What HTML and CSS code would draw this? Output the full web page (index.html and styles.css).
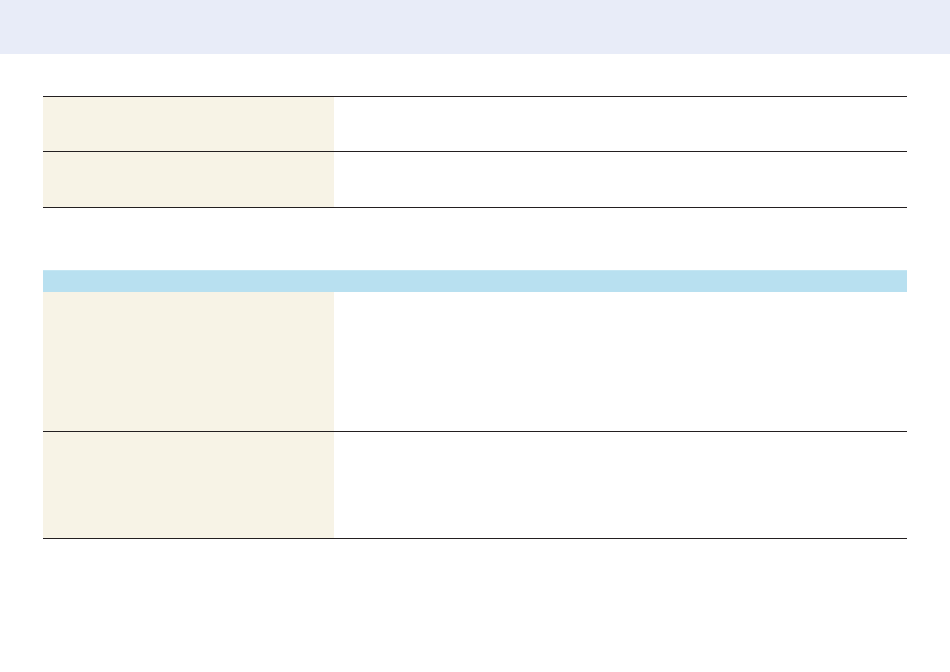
FILE: index.html
```html
<!DOCTYPE html>
<html>
<head>
<meta charset="utf-8">
<link rel="stylesheet" href="styles.css">
</head>
<body>
<header class="banner"></header>
<main class="content">
  <section class="table table-a">
    <div class="row row-a1"><div class="cell label"></div><div class="cell value"></div></div>
    <div class="row row-a2"><div class="cell label"></div><div class="cell value"></div></div>
  </section>
  <section class="table table-b">
    <div class="thead"></div>
    <div class="row row-b1"><div class="cell label"></div><div class="cell value"></div></div>
    <div class="row row-b2 bordered"><div class="cell label"></div><div class="cell value"></div></div>
  </section>
</main>
</body>
</html>
```
FILE: styles.css
```css
html, body {
  margin: 0;
  padding: 0;
  background: #ffffff;
  font-family: "Liberation Sans", Arial, sans-serif;
}
.banner {
  height: 54px;
  background: #e8ecf8;
}
.content {
  padding: 0 43px;
  display: flex;
  flex-direction: column;
}
.table {
  display: flex;
  flex-direction: column;
}
.table-a {
  margin-top: 42px;
  border-bottom: 1px solid #231f20;
}
.table-a .row {
  border-top: 1px solid #231f20;
}
.row {
  display: grid;
  grid-template-columns: 291px 1fr;
}
.row-a1 { height: 54px; }
.row-a2 { height: 55px; }
.label {
  background: #f7f3e6;
}
.value {
  background: #ffffff;
}
.table-b {
  margin-top: 62px;
  border-bottom: 1px solid #231f20;
}
.thead {
  height: 21px;
  background: #b8e0f0;
  border-top: 1px solid #c4e6f3;
}
.row-b1 { height: 139px; }
.row-b2 { height: 106px; }
.bordered {
  border-top: 1px solid #231f20;
}
```
